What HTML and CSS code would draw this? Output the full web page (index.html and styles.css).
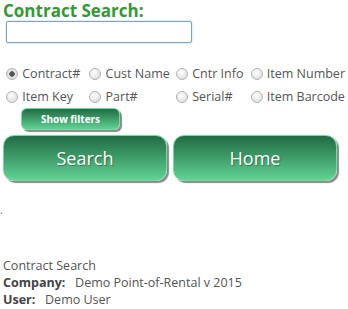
FILE: index.html
```html
<!DOCTYPE html>
<html lang="en">
<head>
  <meta charset="UTF-8">
  <title>Contract Search</title>
  <link rel="stylesheet" href="styles.css">
</head>
<body>
  <div class="search-page">
    <h1 class="search-title">Contract Search:</h1>
    <input type="text" class="search-box" autofocus>

    <table class="search-options">
      <tr>
        <td><label><input type="radio" name="by" checked> Contract#</label></td>
        <td><label><input type="radio" name="by"> Cust Name</label></td>
        <td><label><input type="radio" name="by"> Cntr Info</label></td>
        <td><label><input type="radio" name="by"> Item Number</label></td>
      </tr>
      <tr>
        <td><label><input type="radio" name="by"> Item Key</label></td>
        <td><label><input type="radio" name="by"> Part#</label></td>
        <td><label><input type="radio" name="by"> Serial#</label></td>
        <td><label><input type="radio" name="by"> Item Barcode</label></td>
      </tr>
    </table>

    <button class="btn btn-small">Show filters</button>

    <div class="main-buttons">
      <button class="btn btn-big">Search</button>
      <button class="btn btn-big">Home</button>
    </div>

    <div class="dot">.</div>

    <div class="footer-info">
      <div>Contract Search</div>
      <div><strong>Company:</strong>&nbsp;&nbsp; Demo Point-of-Rental v 2015</div>
      <div><strong>User:</strong>&nbsp;&nbsp; Demo User</div>
    </div>
  </div>
</body>
</html>
```

FILE: styles.css
```css
body {
  margin: 0;
  padding: 0;
  font-family: "Open Sans", Arial, sans-serif;
  color: #444;
  background: #fff;
}

.search-page {
  padding: 0 3px;
}

.search-title {
  margin: 0;
  padding-top: 1px;
  font-size: 17px;
  line-height: 20px;
  font-weight: bold;
  color: #339933;
}

.search-box {
  display: block;
  margin: 0 0 0 3px;
  width: 186px;
  height: 22px;
  box-sizing: border-box;
  border: 1px solid #7da2ce;
  border-radius: 2px;
  outline: none;
  box-shadow: 0 0 2px #9fbde6;
  font-size: 13px;
}

.search-options {
  margin-top: 19px;
  border-collapse: collapse;
  font-size: 12.5px;
  color: #555;
}

.search-options td {
  padding: 0;
  height: 23px;
  white-space: nowrap;
}

.search-options td:nth-child(1) { width: 84px; }
.search-options td:nth-child(2) { width: 87px; }
.search-options td:nth-child(3) { width: 75px; }

.search-options input {
  -webkit-appearance: none;
  appearance: none;
  margin: 0 1px 0 3px;
  width: 12px;
  height: 12px;
  border: 1px solid #b5b5b5;
  border-radius: 50%;
  background: radial-gradient(circle at 40% 35%, #ffffff 0%, #e6e6e6 60%, #d0d0d0 100%);
  vertical-align: -2px;
}

.search-options input:checked {
  background: radial-gradient(circle, #555 0, #555 2.5px, #e8e8e8 3px, #d6d6d6 100%);
}

.btn {
  color: white;
  border: 1px solid #6fdca0;
  background: linear-gradient(to bottom, #226b45 0%, #3f9e6a 50%, #62d394 100%);
  box-shadow: 2px 2px 1px #8a8a8a;
  font-family: "Open Sans", Arial, sans-serif;
  cursor: pointer;
}

.btn-small {
  display: block;
  margin: 0 0 0 18px;
  width: 99px;
  height: 22px;
  border-radius: 6px;
  font-size: 10px;
  font-weight: bold;
  padding: 0;
}

.main-buttons {
  display: flex;
  gap: 6px;
  margin-top: 5px;
}

.btn-big {
  width: 164px;
  height: 46px;
  border-radius: 11px;
  font-size: 18px;
  padding: 0;
  text-shadow: 1px 1px 1px rgba(0,0,0,0.3);
}

.dot {
  margin: 24px 0 0 -3px;
  font-size: 10px;
  line-height: 10px;
  color: #555;
}

.footer-info {
  margin-top: 42px;
  font-size: 12.5px;
  line-height: 17px;
  color: #555;
}

.footer-info strong {
  color: #444;
}
```
